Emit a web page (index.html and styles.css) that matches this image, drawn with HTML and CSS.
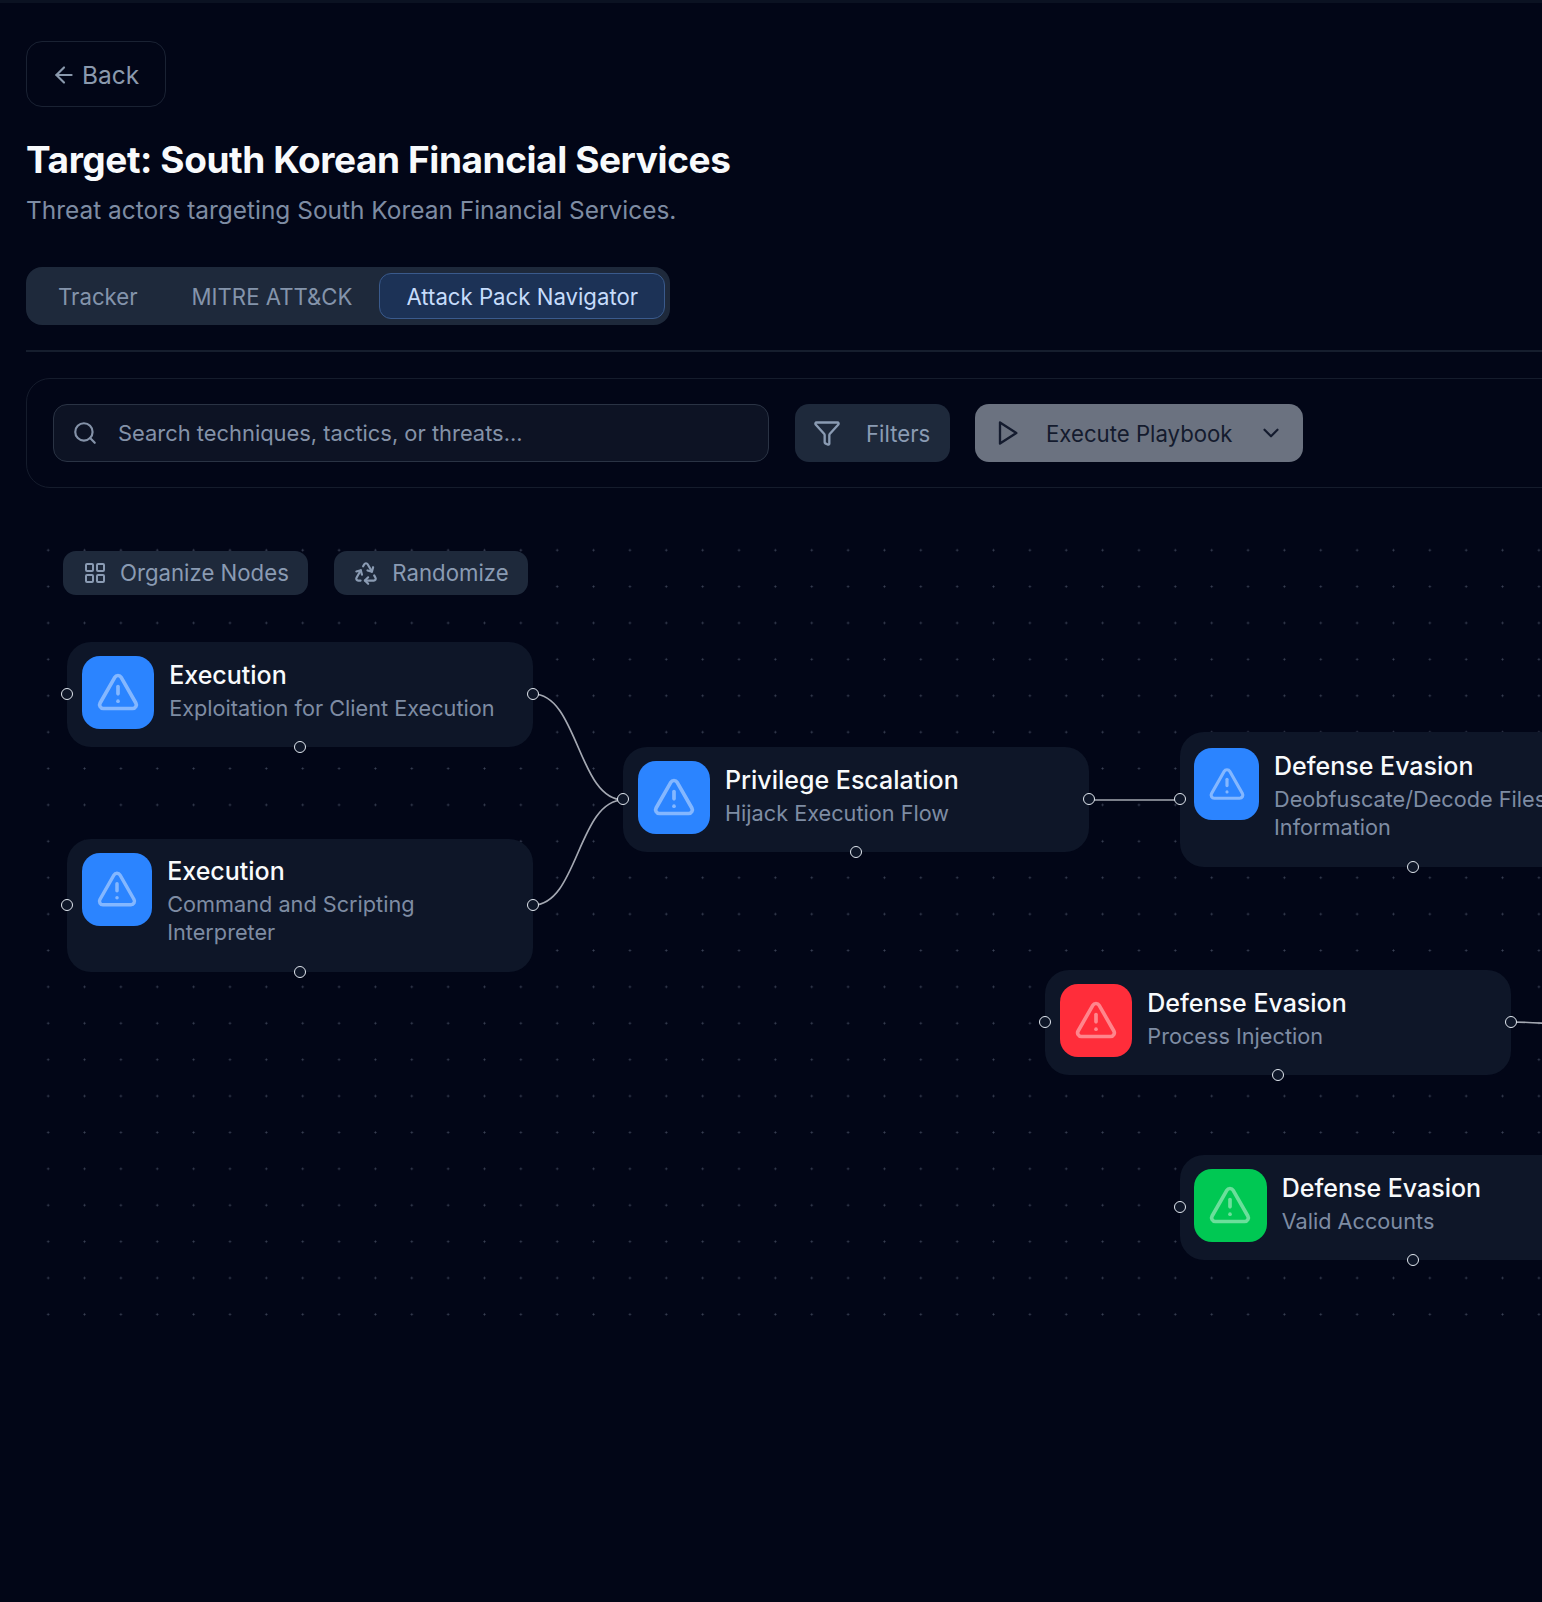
FILE: index.html
```html
<!DOCTYPE html>
<html lang="en">
<head>
<meta charset="utf-8">
<title>Target: South Korean Financial Services</title>
<link rel="stylesheet" href="styles.css">
</head>
<body>
<svg class="sprite" width="0" height="0" aria-hidden="true">
  <symbol id="alert" viewBox="0 0 24 24"><path d="m21.73 18-8-14a2 2 0 0 0-3.48 0l-8 14A2 2 0 0 0 4 21h16a2 2 0 0 0 1.73-3"/><path d="M12 9v4"/><path d="M12 17h.01"/></symbol>
</svg>
<div class="page">
  <header class="head">
    <button class="back"><svg class="ico ico-back" viewBox="0 0 24 24"><path d="m12 19-7-7 7-7"/><path d="M19 12H5"/></svg>Back</button>
    <h1 class="title">Target: South Korean Financial Services</h1>
    <p class="subtitle">Threat actors targeting South Korean Financial Services.</p>
    <nav class="tabs">
      <span class="tab">Tracker</span>
      <span class="tab">MITRE ATT&amp;CK</span>
      <span class="tab tab-active">Attack Pack Navigator</span>
    </nav>
  </header>
  <div class="rule"></div>
  <section class="panel">
    <label class="search">
      <svg class="ico ico-search" viewBox="0 0 24 24"><circle cx="11" cy="11" r="8"/><path d="m21 21-4.3-4.3"/></svg>
      <span class="search-text">Search techniques, tactics, or threats...</span>
    </label>
    <button class="filters"><svg class="ico ico-md" viewBox="0 0 24 24"><path d="M10 20a1 1 0 0 0 .55.9l2 1A1 1 0 0 0 14 21v-7a2 2 0 0 1 .52-1.34L21.74 4.67A1 1 0 0 0 21 3H3a1 1 0 0 0-.74 1.67l7.22 7.99A2 2 0 0 1 10 14z"/></svg><span>Filters</span></button>
    <button class="exec"><svg class="ico ico-md" viewBox="0 0 24 24"><path d="M6 3l14 9-14 9z"/></svg><span class="exec-label">Execute Playbook</span><svg class="ico ico-chev" viewBox="0 0 24 24"><path d="m6 9 6 6 6-6"/></svg></button>
  </section>
  <section class="canvas">
    <svg class="edges" viewBox="0 0 1600 800" width="1600" height="800">
      <path d="M503 162 C548 162 548 268 593.5 268"/>
      <path d="M503 373 C548 373 548 268 593.5 268"/>
      <path d="M1059.5 268 L1150.5 268"/>
      <path d="M1481 490 C1510 490 1530 493 1560 495"/>
    </svg>
    <div class="tools">
      <button class="tool"><svg class="ico ico-tool" viewBox="0 0 24 24"><rect x="3" y="3" width="7" height="7" rx="1"/><rect x="14" y="3" width="7" height="7" rx="1"/><rect x="14" y="14" width="7" height="7" rx="1"/><rect x="3" y="14" width="7" height="7" rx="1"/></svg>Organize Nodes</button>
      <button class="tool tool-random"><svg class="ico ico-recycle" viewBox="0 0 24 24"><path d="M7 19H4.815a1.83 1.83 0 0 1-1.57-.881 1.785 1.785 0 0 1-.004-1.784L7.196 9.5"/><path d="M11 19h8.203a1.83 1.83 0 0 0 1.556-.89 1.784 1.784 0 0 0 0-1.775l-1.226-2.12"/><path d="m14 16-3 3 3 3"/><path d="M8.293 13.596 7.196 9.5 3.1 10.598"/><path d="m9.344 5.811 1.093-1.892A1.83 1.83 0 0 1 11.985 3a1.784 1.784 0 0 1 1.546.888l3.943 6.843"/><path d="m13.378 9.633 4.096 1.098 1.097-4.096"/></svg>Randomize</button>
    </div>

    <article class="node node-a">
      <div class="badge badge-blue"><svg class="alert"><use href="#alert"/></svg></div>
      <div class="node-text"><div class="node-title">Execution</div><div class="node-sub">Exploitation for Client Execution</div></div>
      <i class="port port-l"></i><i class="port port-r"></i><i class="port port-b"></i>
    </article>
    <article class="node node-b">
      <div class="badge badge-blue badge-narrow"><svg class="alert alert-narrow"><use href="#alert"/></svg></div>
      <div class="node-text"><div class="node-title">Execution</div><div class="node-sub">Command and Scripting Interpreter</div></div>
      <i class="port port-l"></i><i class="port port-r"></i><i class="port port-b"></i>
    </article>
    <article class="node node-c">
      <div class="badge badge-blue"><svg class="alert"><use href="#alert"/></svg></div>
      <div class="node-text"><div class="node-title">Privilege Escalation</div><div class="node-sub">Hijack Execution Flow</div></div>
      <i class="port port-l"></i><i class="port port-r"></i><i class="port port-b"></i>
    </article>
    <article class="node node-d">
      <div class="badge badge-blue badge-narrowest"><svg class="alert alert-narrowest"><use href="#alert"/></svg></div>
      <div class="node-text"><div class="node-title">Defense Evasion</div><div class="node-sub">Deobfuscate/Decode Files or Information</div></div>
      <i class="port port-l"></i><i class="port port-r"></i><i class="port port-b"></i>
    </article>
    <article class="node node-e">
      <div class="badge badge-red"><svg class="alert"><use href="#alert"/></svg></div>
      <div class="node-text"><div class="node-title">Defense Evasion</div><div class="node-sub">Process Injection</div></div>
      <i class="port port-l"></i><i class="port port-r"></i><i class="port port-b"></i>
    </article>
    <article class="node node-f">
      <div class="badge badge-green"><svg class="alert"><use href="#alert"/></svg></div>
      <div class="node-text"><div class="node-title">Defense Evasion</div><div class="node-sub">Valid Accounts</div></div>
      <i class="port port-l"></i><i class="port port-r"></i><i class="port port-b"></i>
    </article>
  </section>
</div>
</body>
</html>
```

FILE: styles.css
```css
* { box-sizing: border-box; }
html, body { margin: 0; height: 100%; overflow: hidden; background: #020617; }
body { font-family: Inter, "Liberation Sans", sans-serif; color: #94a3b8; }
.sprite { position: absolute; }
button { font: inherit; color: inherit; border: 0; background: none; padding: 0; }

.page { width: 2000px; height: 1602px; border-top: 3px solid #0b1222; padding: 38px 0 0 26px; }

.ico { fill: none; stroke: currentColor; stroke-width: 2; stroke-linecap: round; stroke-linejoin: round; flex: none; }

.back { display: flex; align-items: center; gap: 5px; width: 140px; height: 66px; padding: 2px 0 0 24px; border: 1px solid #1a2233; border-radius: 16px; font-size: 24.5px; color: #8a99ad; }
.ico-back { width: 26px; height: 26px; }

.title { margin: 29px 0 0; font-size: 37px; line-height: 48px; font-weight: 700; color: #f8fafc; letter-spacing: -0.42px; }
.subtitle { margin: 7.5px 0 0; font-size: 24.45px; line-height: 36px; color: #7e8ca3; }

.tabs { display: inline-flex; align-items: center; margin-top: 39px; height: 58px; padding: 0 5px; border-radius: 16px; background: #1e293b; font-size: 22.2px; }
.tab { padding: 1px 26px 0; height: 46px; display: flex; align-items: center; border: 1px solid transparent; border-radius: 12px; color: #8494ab; }
.tab-active { background: #1c3256; border-color: #3a5a8c; color: #c6dcfb; }

.rule { width: 100%; height: 2px; margin-top: 25px; background: #161e2e; }

.panel { display: flex; align-items: center; gap: 26px; margin-top: 26px; height: 110px; padding: 1px 0 0 26px; border: 1px solid #151c2c; border-radius: 24px; }
.search { display: flex; align-items: center; width: 716px; height: 58px; padding-left: 18px; border: 1px solid #2a3344; border-radius: 14px; background: #0d1324; font-size: 21.9px; color: #8492a8; }
.ico-search { width: 26px; height: 26px; }
.search-text { margin-left: 20px; }
.filters { display: flex; align-items: center; gap: 25px; width: 155px; height: 58px; padding-left: 18px; border-radius: 14px; background: #1e293b; font-size: 22.2px; color: #8a9bb3; }
.ico-md { width: 28px; height: 28px; }
.exec { display: flex; align-items: center; width: 328px; height: 58px; margin-left: -1px; padding-left: 18px; border-radius: 14px; background: #6b7280; font-size: 22.2px; color: #141b2e; }
.exec-label { margin-left: 25px; }
.ico-chev { width: 26px; height: 26px; margin-left: 25px; }

.canvas { position: relative; margin: 44px 0 0 3.5px; width: 1600px; height: 800px; background-image: radial-gradient(circle at center, #3b4256 0.9px, transparent 1.1px); background-size: 36.36px 36.4px; }
.edges { position: absolute; left: 0; top: 0; fill: none; stroke: #a4a8b2; stroke-width: 1.7; }

.tools { position: absolute; left: 33.5px; top: 19px; display: flex; gap: 26px; }
.tool { display: flex; align-items: center; gap: 13px; height: 44px; padding: 0 19px 0 20px; border-radius: 13px; background: #1e293b; font-size: 22.2px; color: #8a9bb3; }
.tool-random { gap: 13.5px; padding-left: 19px; }
.ico-tool { width: 24px; height: 24px; }
.ico-recycle { width: 26px; height: 26px; }

.node { position: absolute; display: flex; align-items: flex-start; gap: 15px; width: 466px; padding: 14.5px 14px 18px 14.5px; border-radius: 24px; background: #0e1628; }
.node-a { left: 37.7px; top: 110px; }
.node-b { left: 37.7px; top: 307px; }
.node-c { left: 593.5px; top: 215px; }
.node-d { left: 1150px; top: 200.5px; padding-top: 15.5px; padding-bottom: 18.5px; }
.node-e { left: 1015.8px; top: 438px; }
.node-f { left: 1150.2px; top: 623px; }

.badge { flex: none; display: flex; align-items: center; justify-content: center; width: 72.5px; height: 72.5px; border-radius: 18px; }
.badge-narrow { width: 70.5px; }
.badge-narrowest { width: 65px; }
.badge-blue { background: #2b84ff; }
.badge-red { background: #ff2d3a; }
.badge-green { background: #00c853; }
.alert { width: 44px; height: 44px; fill: none; stroke: rgba(255, 255, 255, 0.42); stroke-width: 2; stroke-linecap: round; stroke-linejoin: round; }
.alert-narrow { width: 42px; height: 42px; }
.alert-narrowest { width: 38px; height: 38px; }

.node-text { min-width: 0; padding: 1px 0 6.5px; }
.node-d .node-text, .node-b .node-text { padding-top: 0; padding-bottom: 7.5px; }
.node-title { font-size: 25px; line-height: 36px; font-weight: 500; color: #f8fafc; }
.node-sub { margin-top: 1px; font-size: 21.7px; line-height: 28px; color: #7e8ca3; }

.port { position: absolute; width: 12px; height: 12px; border: 1.7px solid #e2e8f0; border-radius: 50%; background: #0e1628; }
.port-l { left: -6px; top: calc(50% - 6px); }
.port-r { right: -6px; top: calc(50% - 6px); }
.port-b { left: calc(50% - 6px); bottom: -6px; }
```
